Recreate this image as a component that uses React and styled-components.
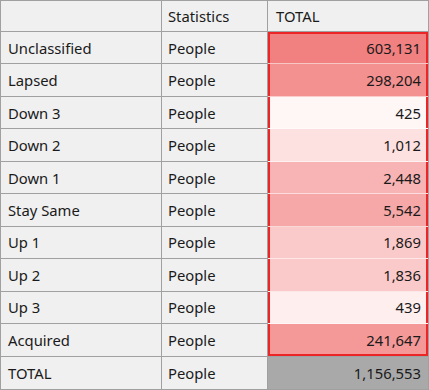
import React from "react";
import styled, { createGlobalStyle } from "styled-components";

const Global = createGlobalStyle`
  html, body { margin: 0; padding: 0; background: #ffffff; }
  body { font-family: "Noto Sans", "Open Sans", sans-serif; }
`;

const Grid = styled.div`
  box-sizing: border-box;
  width: 429px;
  height: 390px;
  display: grid;
  grid-template-columns: 161px 106px 1fr;
  grid-template-rows: 31px repeat(11, 1fr);
  border: 1px solid #a0a0a0;
  background: #f0f0f0;
  font-size: 14.8px;
  color: #1a1a1a;
`;

const Cell = styled.div`
  box-sizing: border-box;
  display: flex;
  align-items: center;
  padding: 0 6px;
  border-right: ${(p) => (p.$lastCol ? "none" : "1px solid #a0a0a0")};
  border-bottom: ${(p) => (p.$lastRow ? "none" : "1px solid #a0a0a0")};
  background: #f0f0f0;
  white-space: nowrap;
  overflow: hidden;
`;

const HeadCell = styled(Cell)`
  padding-left: ${(p) => (p.$lastCol ? "8px" : "6px")};
`;

const LabelCell = styled(Cell)`
  padding-left: ${(p) => (p.$first ? "7px" : "6px")};
`;

const ValueCell = styled(Cell)`
  justify-content: flex-end;
  padding-right: 7px;
  background: ${(p) => p.$bg};
  border-bottom: ${(p) =>
    p.$lastRow
      ? "none"
      : p.$total || p.$last
      ? "1px solid #a0a0a0"
      : "1px solid rgba(255, 255, 255, 0.55)"};
  box-shadow: ${(p) =>
    p.$total
      ? "none"
      : [
          "inset 2px 0 0 #ec2626",
          "inset -2px 0 0 #ec2626",
          p.$first ? "inset 0 2px 0 #ec2626" : null,
          p.$last ? "inset 0 -2px 0 #ec2626" : null,
        ]
          .filter(Boolean)
          .join(", ")};
`;

const rows = [
  { label: "Unclassified", value: "603,131", bg: "#f18080" },
  { label: "Lapsed", value: "298,204", bg: "#f39090" },
  { label: "Down 3", value: "425", bg: "#fff6f6" },
  { label: "Down 2", value: "1,012", bg: "#fde0e0" },
  { label: "Down 1", value: "2,448", bg: "#f8b4b4" },
  { label: "Stay Same", value: "5,542", bg: "#f6a8a8" },
  { label: "Up 1", value: "1,869", bg: "#fac9c9" },
  { label: "Up 2", value: "1,836", bg: "#facaca" },
  { label: "Up 3", value: "439", bg: "#feeeee" },
  { label: "Acquired", value: "241,647", bg: "#f49898" },
];

export default function App() {
  return (
    <>
      <Global />
      <Grid>
        <HeadCell />
        <HeadCell>Statistics</HeadCell>
        <HeadCell $lastCol>TOTAL</HeadCell>
        {rows.map((r, i) => (
          <React.Fragment key={r.label}>
            <LabelCell $first>{r.label}</LabelCell>
            <LabelCell>People</LabelCell>
            <ValueCell
              $lastCol
              $bg={r.bg}
              $first={i === 0}
              $last={i === rows.length - 1}
            >
              {r.value}
            </ValueCell>
          </React.Fragment>
        ))}
        <LabelCell $first $lastRow>TOTAL</LabelCell>
        <LabelCell $lastRow>People</LabelCell>
        <ValueCell $lastCol $lastRow $total $bg="#a9a9a9">
          1,156,553
        </ValueCell>
      </Grid>
    </>
  );
}
